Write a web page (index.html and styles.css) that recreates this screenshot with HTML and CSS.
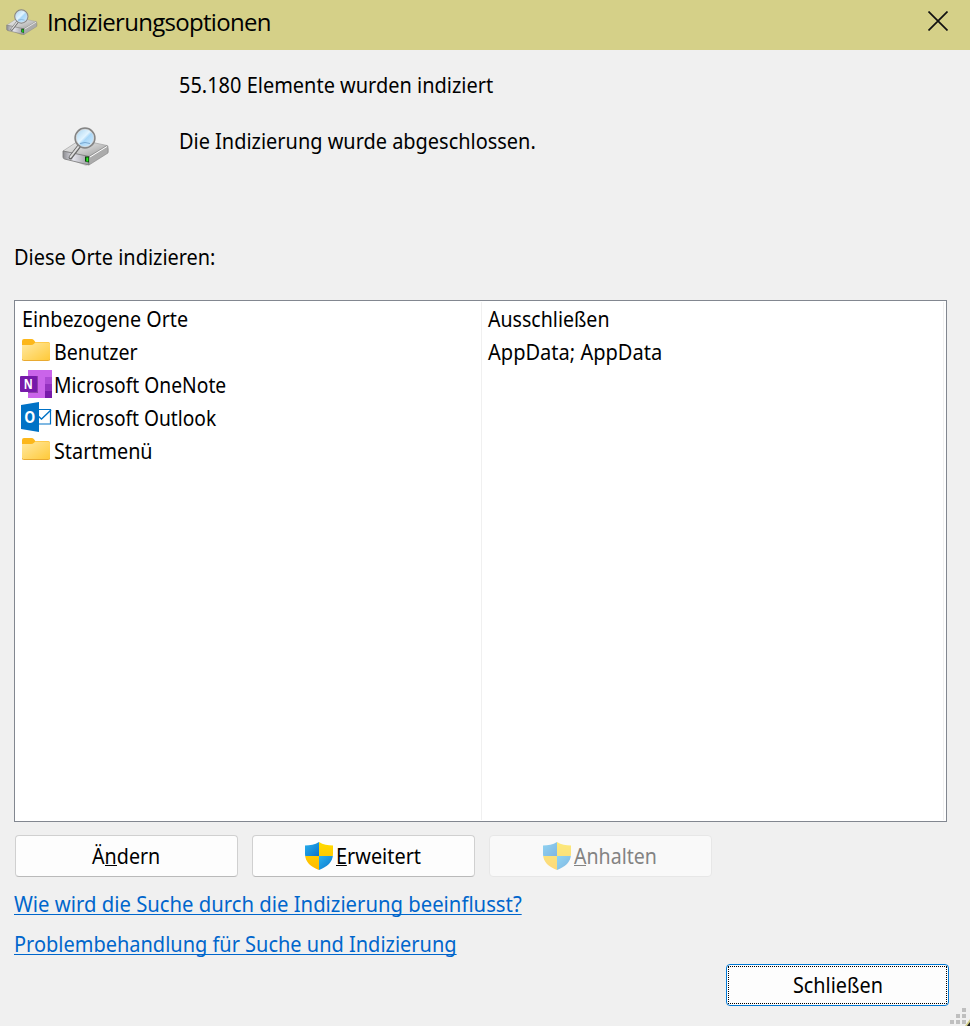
FILE: index.html
```html
<!DOCTYPE html>
<html lang="de">
<head>
<meta charset="utf-8">
<title>Indizierungsoptionen</title>
<link rel="stylesheet" href="styles.css">
</head>
<body>
<svg class="defs" width="0" height="0" aria-hidden="true">
  <defs>
    <linearGradient id="metal" x1="0" y1="0" x2="1" y2="1"><stop offset="0" stop-color="#f3f3f3"/><stop offset=".55" stop-color="#c9c9c9"/><stop offset="1" stop-color="#969696"/></linearGradient>
    <linearGradient id="front" x1="0" y1="0" x2="1" y2="0"><stop offset="0" stop-color="#8c8c90"/><stop offset=".4" stop-color="#e4e4ec"/><stop offset="1" stop-color="#9a9aa0"/></linearGradient>
    <linearGradient id="glass" x1="0" y1="0" x2="1" y2="1"><stop offset="0" stop-color="#9fceee"/><stop offset=".45" stop-color="#e2f4ff"/><stop offset=".55" stop-color="#a9d7f8"/><stop offset="1" stop-color="#d8efff"/></linearGradient>
    <linearGradient id="fold" x1="0" y1="0" x2="1" y2="1"><stop offset="0" stop-color="#ffe9a3"/><stop offset="1" stop-color="#ffc937"/></linearGradient>
    <linearGradient id="blue" x1="0" y1="0" x2="1" y2="1"><stop offset="0" stop-color="#2ab2ee"/><stop offset="1" stop-color="#0a74cc"/></linearGradient>
    <linearGradient id="gold" x1="0" y1="0" x2="0" y2="1"><stop offset="0" stop-color="#ffdc00"/><stop offset="1" stop-color="#ffb900"/></linearGradient>
    <symbol id="drive" viewBox="0 0 48 40">
      <path d="M4 31 24 39 47 25v-4L30 33z" fill="#000" opacity=".14"/>
      <path d="M1 24 17 13.500Q18.500 13 20 13.200L45 18.500 27 30z" fill="url(#metal)" stroke="#a2a2a2" stroke-width=".7"/>
      <path d="M1 24 27 29.500V38L2.500 32Q1 31.500 1 30z" fill="url(#front)" stroke="#777" stroke-width=".8"/>
      <path d="M27 29.500 45 18.500Q46 18.500 46 20v6L27 38z" fill="#ababab" stroke="#858585" stroke-width=".6"/>
      <path d="M28 30 45 19.500" stroke="#fff" stroke-width="1"/>
      <path d="M23 29.500h4v6l-4-1z" fill="#0c3c0c"/><path d="M24.300 30.500h2v4h-2z" fill="#26ec22"/>
      <path d="M18 18 8.500 30.500" stroke="#666" stroke-width="3.800" stroke-linecap="round"/>
      <path d="M17.800 18 8.500 30" stroke="#ddd" stroke-width="2" stroke-linecap="round"/>
      <circle cx="23" cy="11" r="9.800" fill="url(#glass)" stroke="#858585" stroke-width="1.800"/>
      <circle cx="23" cy="11" r="8.700" fill="none" stroke="#ddd" stroke-width=".7"/>
      <path d="M18 16.500q5-2 10 0" fill="none" stroke="#6b9ac6" stroke-width=".8"/>
    </symbol>
    <symbol id="folder" viewBox="0 0 28 22">
      <path d="M0 2Q0 0 2 0h7.500Q11 0 12 1.200L13.300 3H26q2 0 2 2v4H0z" fill="#fcb71b"/>
      <path d="M0 6h9q2 0 3-1.200L13.300 3.500H26q2 0 2 2V20q0 1.500-1.500 1.500h-25Q0 21.500 0 20z" fill="url(#fold)"/>
      <path d="M0 20.200Q.3 21.500 1.500 21.500h25q1.200 0 1.500-1.300" fill="none" stroke="#e9aa32" stroke-width="1"/>
    </symbol>
    <symbol id="shield" viewBox="0 0 28 28">
      <clipPath id="shape"><path d="M14 0C10 2.800 5 3.500 0 3.500V12c0 8 6 13 14 16 8-3 14-8 14-16V3.500C23 3.500 18 2.800 14 0z"/></clipPath>
      <g clip-path="url(#shape)"><path d="M0 0h14v14H0z" fill="url(#blue)"/><path d="M14 0h14v14H14zM0 14h14v14H0z" fill="url(#gold)"/><path d="M14 14h14v14H14z" fill="url(#blue)"/></g>
    </symbol>
  </defs>
</svg>
<main class="window">
  <header class="titlebar">
    <svg class="title-icon"><use href="#drive"/></svg>
    <h1 class="title">Indizierungsoptionen</h1>
    <svg class="close" viewBox="0 0 20 20"><path d="M.5.5l19 19M19.500.5l-19 19" stroke="#111" stroke-width="1.700"/></svg>
  </header>
  <section class="status">
    <svg class="status-icon"><use href="#drive"/></svg>
    <div class="messages"><p class="t count">55.180 Elemente wurden indiziert</p><p class="t state">Die Indizierung wurde abgeschlossen.</p></div>
  </section>
  <p class="t list-label">Diese Orte indizieren:</p>
  <section class="list">
    <div class="col included">
      <div class="row head"><span class="t head-text">Einbezogene Orte</span></div>
      <div class="row"><svg class="folder"><use href="#folder"/></svg><span class="t benutzer">Benutzer</span></div>
      <div class="row">
        <svg class="app" viewBox="0 0 32 32"><path d="M8 2h24v28H8z" fill="#ca64ea"/><path d="M25 9h7v7h-7z" fill="#ae4bd5"/><path d="M25 16h7v7h-7z" fill="#9332bf"/><path d="M25 23h7v7h-7z" fill="#7719aa"/><path d="M8 8h10v17H8z" fill="#672b80" opacity=".6"/><rect y="8" width="17" height="16" rx="1" fill="#7719aa"/><text x="8.300" y="21" textLength="9" lengthAdjust="spacingAndGlyphs" class="glyph n">N</text></svg>
        <span class="t onenote">Microsoft OneNote</span></div>
      <div class="row">
        <svg class="app" viewBox="0 0 32 32"><path d="M17 8.500h13.500v14.500H17" fill="#fff" stroke="#0072c6" stroke-width="1.200"/><path d="M17 14l4.500 4L31 9" fill="none" stroke="#0072c6" stroke-width="1.400"/><path d="M1 4 19 1v30L1 28z" fill="#0072c6"/><text x="9.800" y="21.500" textLength="11" lengthAdjust="spacingAndGlyphs" class="glyph o">O</text></svg>
        <span class="t outlook">Microsoft Outlook</span></div>
      <div class="row"><svg class="folder"><use href="#folder"/></svg><span class="t">Startmenü</span></div>
    </div>
    <div class="col excluded"><div class="row"><span class="t ausschl">Ausschließen</span></div><div class="row"><span class="t appdata">AppData; AppData</span></div></div>
  </section>
  <div class="buttons">
    <button class="btn"><span class="t aendern">Ä<u>n</u>dern</span></button>
    <button class="btn"><svg class="shield"><use href="#shield"/></svg><span class="t erweitert"><u>E</u>rweitert</span></button>
    <button class="btn" disabled><svg class="shield"><use href="#shield"/></svg><span class="t anhalten"><u>A</u>nhalten</span></button>
  </div>
  <nav class="links"><a class="t link1">Wie wird die Suche durch die Indizierung beeinflusst?</a><a class="t link2">Problembehandlung für Suche und Indizierung</a></nav>
  <footer class="footer"><button class="btn default"><span class="focus"><span class="t close-text">Schließen</span></span></button></footer>
  <svg class="grip" viewBox="0 0 20 18"><path d="M12 0h4v4h-4zM6 6h4v4H6zM12 6h4v4h-4zM0 12h4v4H0zM6 12h4v4H6zM12 12h4v4h-4z" fill="#bfbfbf"/><path d="M20 11v7h-5z" fill="#d5d088"/><path d="M20 14v4h-3z" fill="#222"/></svg>
</main>
</body>
</html>
```
FILE: styles.css
```css
* { box-sizing: border-box; }
body { margin: 0; background: #f0f0f0; color: #000; font: 22px/30px "Noto Sans", sans-serif; }
p, h1 { margin: 0; }
svg { display: block; flex: none; }
.defs { position: absolute; }
.window { position: relative; width: 970px; height: 1026px; overflow: hidden; white-space: nowrap; }
/* Condensed UI lettering: --w is the horizontal scale of a label. */
.t { --w: .9; display: block; transform-origin: 0 50%; transform: translateY(-1px) scaleX(var(--w)); }
.count { --w: .9075; }
.state { --w: .906; }
.titlebar { height: 50px; display: flex; align-items: center; padding: 0 22px 5px 6px; background: #d5d088; }
.title-icon { width: 32px; height: 27px; }
.title { flex: 1; margin: -2px 0 0 9px; font: 400 24px/32px "Open Sans", sans-serif; letter-spacing: -.7px; }
.close { width: 20px; height: 20px; margin-top: -4px; }
.status { display: flex; height: 192px; padding: 20px 0 0 62px; }
.status-icon { width: 48px; height: 40px; margin-top: 57px; }
.messages { display: grid; grid-auto-rows: 30px; gap: 26px; margin-left: 69px; }
.list-label { --w: .905; margin-left: 14px; }
.list { display: flex; width: 933px; height: 522px; margin: 28px 0 0 14px; padding: 1px 2px 1px 0; border: 1px solid #828790; background: #fff; }
.col { border-right: 1px solid #f0f0f0; }
.included { width: 467px; padding-left: 5px; }
.excluded { flex: 1; padding-left: 6px; }
.row { display: flex; align-items: center; height: 33px; }
.head { padding-left: 2px; }
.head-text { --w: .897; }
.benutzer { --w: .892; }
.onenote { --w: .875; }
.outlook { --w: .872; }
.ausschl { --w: .89; }
.appdata { --w: .911; }
.folder { width: 28px; height: 22px; margin: -4px 4px 0 2px; }
.app { width: 32px; height: 32px; margin: -1px 2px 0 0; }
.glyph { fill: #fff; font-family: "Open Sans", sans-serif; font-weight: 700; text-anchor: middle; }
.n { font-size: 14px; }
.o { font-size: 16px; }
.buttons { display: flex; gap: 14px; margin: 13px 0 0 15px; }
.btn { display: flex; align-items: center; justify-content: center; gap: 3px; width: 223px; height: 42px; padding: 0; border: 1px solid #d0d0d0; border-bottom-color: #bababa; border-radius: 4px; background: #fdfdfd; color: #000; font: inherit; }
.btn:disabled { background: #f9f9f9; border-color: #e7e7e7; color: #838383; }
.btn:disabled .shield { opacity: .5; }
.btn u { text-decoration: none; box-shadow: inset 0 -1px currentColor; display: inline-block; line-height: 25px; height: 23px; }
.aendern { --w: .895; margin-right: -8px; }
.erweitert { --w: .904; margin-right: -9px; }
.anhalten { --w: .89; margin-right: -10px; }
.shield { width: 28px; height: 28px; }
.links { display: grid; grid-auto-rows: 30px; justify-items: start; gap: 10px; margin: 12px 0 0 14px; }
.links a { color: #0066cc; text-decoration: underline; text-decoration-thickness: 1px; text-underline-offset: 2px; text-decoration-skip-ink: none; }
.link1 { --w: .922; }
.link2 { --w: .908; }
.footer { display: flex; justify-content: flex-end; margin: 5px 21px 0 0; }
.default { border-color: #0078d4; padding: 1px; }
.focus { display: grid; place-items: center; width: 100%; height: 100%; border: 1px dotted #000; }
.close-text { transform-origin: 50% 50%; }
.grip { position: absolute; right: 0; bottom: 0; width: 20px; height: 18px; }
```
